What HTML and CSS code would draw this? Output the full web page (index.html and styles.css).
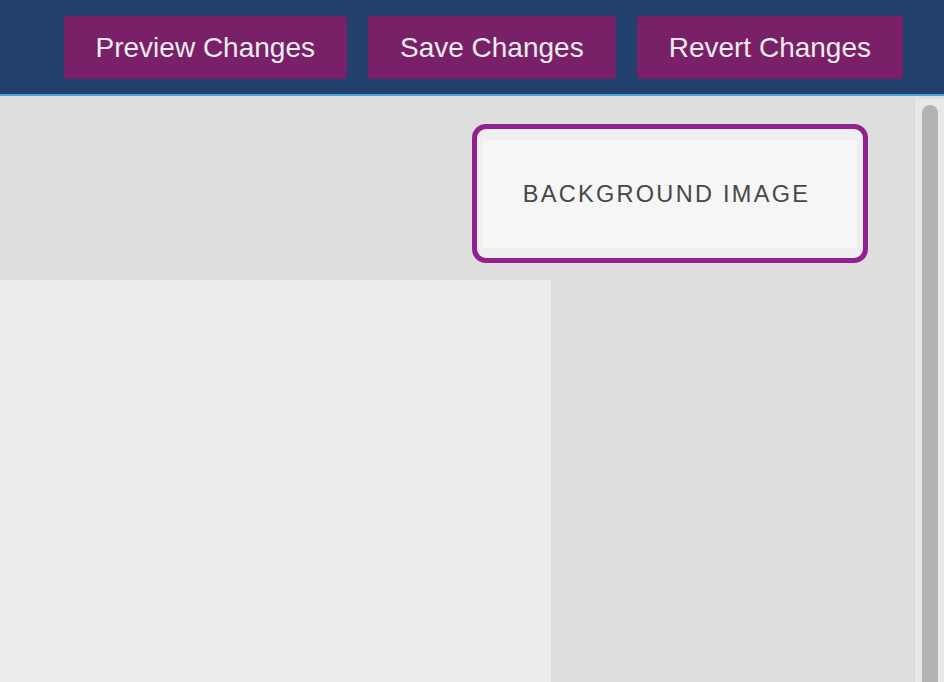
FILE: index.html
```html
<!DOCTYPE html>
<html>
<head>
<meta charset="utf-8">
<link rel="stylesheet" href="styles.css">
</head>
<body>
<header class="topbar">
  <button class="btn">Preview Changes</button>
  <button class="btn">Save Changes</button>
  <button class="btn">Revert Changes</button>
</header>
<div class="workspace">
  <div class="content">
    <div class="toolrow">
      <div class="bgbox"><div class="bgbox-inner">BACKGROUND IMAGE</div></div>
    </div>
    <div class="panel"></div>
  </div>
  <div class="scrollbar"><div class="thumb"></div></div>
</div>
</body>
</html>
```
FILE: styles.css
```css
html, body {
  margin: 0;
  padding: 0;
  height: 100%;
}
body {
  background: #dedede;
  font-family: "Liberation Sans", Arial, sans-serif;
  overflow: hidden;
  display: flex;
  flex-direction: column;
}
.topbar {
  box-sizing: border-box;
  background: #22416f;
  border-bottom: 2px solid #4fa6d8;
  height: 96px;
  display: flex;
  justify-content: flex-end;
  align-items: flex-start;
  gap: 21px;
  padding: 16px 41px 0 0;
}
.btn {
  background: #7a2069;
  color: #ececec;
  border: none;
  border-radius: 4px;
  height: 63px;
  padding: 0 32px;
  font-family: "Liberation Sans", Arial, sans-serif;
  font-size: 28px;
}
.workspace {
  flex: 1;
  display: flex;
  min-height: 0;
}
.content {
  flex: 1;
  display: flex;
  flex-direction: column;
}
.toolrow {
  height: 184px;
  display: flex;
  justify-content: flex-end;
  align-items: flex-start;
  padding: 28px 46px 0 0;
  box-sizing: border-box;
}
.bgbox {
  width: 396px;
  height: 139px;
  box-sizing: border-box;
  border: 5px solid #93208f;
  border-radius: 14px;
  background: #efefef;
  padding: 11px 6px 10px 5px;
  display: flex;
}
.bgbox-inner {
  flex: 1;
  background: #f6f6f6;
  display: flex;
  align-items: center;
  justify-content: center;
  color: #474747;
  font-size: 23.5px;
  letter-spacing: 2.3px;
  padding-right: 6px;
}
.panel {
  width: 551px;
  flex: 1;
  background: #ececec;
}
.scrollbar {
  width: 30px;
  margin-top: 3px;
  background: #e8e8e8;
  border-left: 1px solid #d6d6d6;
  padding: 6px 6px 0 7px;
  box-sizing: border-box;
}
.thumb {
  height: 100%;
  background: #b3b3b3;
  border-radius: 8px 8px 0 0;
}
```
